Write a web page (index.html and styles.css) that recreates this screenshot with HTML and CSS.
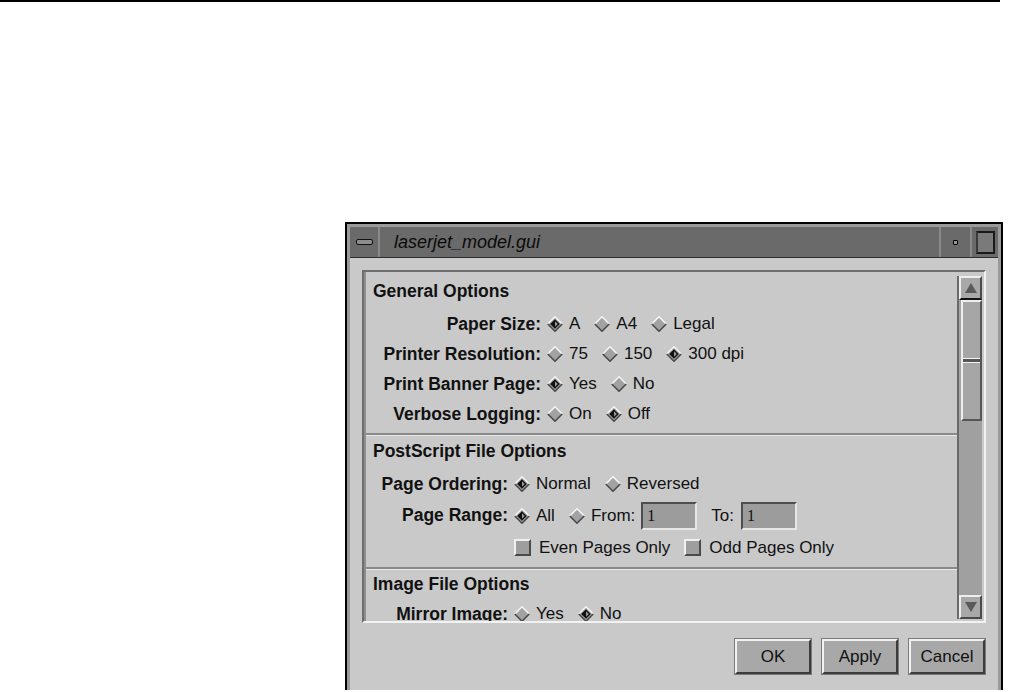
FILE: index.html
```html
<!DOCTYPE html>
<html lang="en">
<head>
    <meta charset="UTF-8">
    <title>laserjet_model.gui</title>
    <link rel="stylesheet" href="styles.css">
</head>
<body>
    <div class="rule"></div>

    <svg class="defs" width="0" height="0">
        <symbol id="radio-off" viewBox="0 0 16 16">
            <polygon points="8,0.5 15.5,8 8,15.5 0.5,8" fill="#a2a2a2"/>
            <polyline points="0.8,8 8,0.8 15.2,8" fill="none" stroke="#f4f4f4" stroke-width="1.6"/>
            <polyline points="0.8,8 8,15.2 15.2,8" fill="none" stroke="#4a4a4a" stroke-width="1.6"/>
        </symbol>
        <symbol id="radio-on" viewBox="0 0 16 16">
            <polygon points="8,0.5 15.5,8 8,15.5 0.5,8" fill="#a2a2a2"/>
            <polyline points="0.8,8 8,0.8 15.2,8" fill="none" stroke="#f4f4f4" stroke-width="1.6"/>
            <polyline points="0.8,8 8,15.2 15.2,8" fill="none" stroke="#4a4a4a" stroke-width="1.6"/>
            <polygon points="8,3.2 12.8,8 8,12.8 3.2,8" fill="#111"/>
            <polygon points="8,5.2 10.8,8 8,10.8" fill="#9a9a9a"/>
        </symbol>
    </svg>

    <div class="window">
        <div class="frame">
            <div class="titlebar">
                <div class="tb-menu"><span class="menu-bar"></span></div>
                <div class="tb-title">laserjet_model.gui</div>
                <div class="tb-min"><span class="dot"></span></div>
                <div class="tb-max"><span class="square"></span></div>
            </div>

            <div class="client">
                <div class="pane">
                    <div class="pane-content">

                        <div class="section general">
                            <div class="sec-title">General Options</div>
                            <div class="row">
                                <div class="label">Paper Size:</div>
                                <div class="opts">
                                    <span class="opt"><svg class="radio"><use href="#radio-on"/></svg>A</span>
                                    <span class="opt"><svg class="radio"><use href="#radio-off"/></svg>A4</span>
                                    <span class="opt"><svg class="radio"><use href="#radio-off"/></svg>Legal</span>
                                </div>
                            </div>
                            <div class="row">
                                <div class="label">Printer Resolution:</div>
                                <div class="opts">
                                    <span class="opt"><svg class="radio"><use href="#radio-off"/></svg>75</span>
                                    <span class="opt"><svg class="radio"><use href="#radio-off"/></svg>150</span>
                                    <span class="opt"><svg class="radio"><use href="#radio-on"/></svg>300 dpi</span>
                                </div>
                            </div>
                            <div class="row">
                                <div class="label">Print Banner Page:</div>
                                <div class="opts">
                                    <span class="opt"><svg class="radio"><use href="#radio-on"/></svg>Yes</span>
                                    <span class="opt"><svg class="radio"><use href="#radio-off"/></svg>No</span>
                                </div>
                            </div>
                            <div class="row">
                                <div class="label">Verbose Logging:</div>
                                <div class="opts">
                                    <span class="opt"><svg class="radio"><use href="#radio-off"/></svg>On</span>
                                    <span class="opt"><svg class="radio"><use href="#radio-on"/></svg>Off</span>
                                </div>
                            </div>
                        </div>

                        <div class="section postscript">
                            <div class="sec-title">PostScript File Options</div>
                            <div class="row">
                                <div class="label">Page Ordering:</div>
                                <div class="opts">
                                    <span class="opt"><svg class="radio"><use href="#radio-on"/></svg>Normal</span>
                                    <span class="opt"><svg class="radio"><use href="#radio-off"/></svg>Reversed</span>
                                </div>
                            </div>
                            <div class="row tall">
                                <div class="label">Page Range:</div>
                                <div class="opts">
                                    <span class="opt"><svg class="radio"><use href="#radio-on"/></svg>All</span>
                                    <span class="opt from"><svg class="radio"><use href="#radio-off"/></svg>From:</span>
                                    <span class="field">1</span>
                                    <span class="opt to">To:</span>
                                    <span class="field">1</span>
                                </div>
                            </div>
                            <div class="row checks">
                                <div class="label"></div>
                                <div class="opts">
                                    <span class="opt"><span class="check"></span>Even Pages Only</span>
                                    <span class="opt"><span class="check"></span>Odd Pages Only</span>
                                </div>
                            </div>
                        </div>

                        <div class="section image">
                            <div class="sec-title">Image File Options</div>
                            <div class="row">
                                <div class="label">Mirror Image:</div>
                                <div class="opts">
                                    <span class="opt"><svg class="radio"><use href="#radio-off"/></svg>Yes</span>
                                    <span class="opt"><svg class="radio"><use href="#radio-on"/></svg>No</span>
                                </div>
                            </div>
                        </div>

                    </div>

                    <div class="scrollbar">
                        <div class="arrow up"><span class="tri-up"></span></div>
                        <div class="thumb"><span class="grip"></span></div>
                        <div class="trough"></div>
                        <div class="arrow down"><span class="tri-down"></span></div>
                    </div>
                </div>

                <div class="buttons">
                    <button class="btn">OK</button>
                    <button class="btn">Apply</button>
                    <button class="btn">Cancel</button>
                </div>
            </div>
        </div>
    </div>
</body>
</html>
```

FILE: styles.css
```css
body {
    margin: 0;
    background: #fff;
    font-family: "Liberation Sans", Arial, sans-serif;
    color: #111;
}
.defs {
    position: absolute;
}
.rule {
    width: 1000px;
    height: 2px;
    background: #000;
}

/* window */
.window {
    margin: 220px 0 0 345px;
    width: 654px;
    height: 466px;
    border: 2px solid #000;
    border-bottom: 0;
}
.frame {
    height: 100%;
    border: 3px solid #9a9a9a;
    border-bottom: 0;
    box-sizing: border-box;
    display: flex;
    flex-direction: column;
    background: #c9c9c9;
}
.titlebar {
    height: 30px;
    display: flex;
    background: #6a6a6a;
    border-bottom: 1px solid #2e2e2e;
}
.tb-menu {
    width: 28px;
    display: flex;
    align-items: center;
    justify-content: center;
    border-right: 2px solid #8a8a8a;
}
.menu-bar {
    width: 15px;
    height: 4px;
    background: #8c8c8c;
    border: 1px solid #111;
    border-radius: 2px;
}
.tb-title {
    flex: 1;
    padding-left: 14px;
    font-style: italic;
    font-size: 18px;
    line-height: 30px;
    color: #0a0a0a;
}
.tb-min {
    width: 29px;
    display: flex;
    align-items: center;
    justify-content: center;
    border-left: 2px solid #8a8a8a;
    border-right: 2px solid #8a8a8a;
}
.dot {
    width: 3px;
    height: 3px;
    background: #999;
    border: 1px solid #000;
    border-radius: 1px;
}
.tb-max {
    width: 26px;
    display: flex;
    align-items: center;
    justify-content: center;
}
.square {
    width: 15px;
    height: 19px;
    border: 2px solid #1a1a1a;
    border-left-color: #3a3a3a;
    background: #7a7a7a;
}

/* client area */
.client {
    flex: 1;
    padding: 12px 12px 0 12px;
    display: flex;
    flex-direction: column;
}
.pane {
    height: 353px;
    display: flex;
    border: 2px solid;
    border-color: #6e6e6e #f2f2f2 #f2f2f2 #6e6e6e;
    box-sizing: border-box;
}
.pane-content {
    flex: 1;
    overflow: hidden;
    border-left: 2px solid #8e8e8e;
}
.section {
    padding: 0 0 4px 7px;
    border-bottom: 2px solid #8a8a8a;
    box-shadow: 0 1px 0 #e8e8e8;
}
.section.general {
    padding-top: 4px;
}
.section.postscript {
    padding-top: 1px;
}
.sec-title {
    height: 30px;
    line-height: 30px;
    margin-bottom: 3px;
    font-weight: bold;
    font-size: 17.5px;
}
.image .sec-title {
    margin-bottom: 0;
}
.row {
    display: flex;
    align-items: center;
    height: 30px;
}
.row.tall {
    height: 33px;
}
.row.checks {
    height: 31px;
}
.label {
    font-weight: bold;
    font-size: 17.5px;
    text-align: right;
    padding-right: 6px;
}
.general .label {
    width: 168px;
}
.postscript .label,
.image .label {
    width: 135px;
}
.opts {
    display: flex;
    align-items: center;
    font-size: 17px;
}
.opt {
    display: flex;
    align-items: center;
    margin-right: 14px;
}
.opt.from {
    margin-right: 6px;
}
.opt.to {
    margin-left: 14px;
    margin-right: 7px;
}
.radio {
    width: 16px;
    height: 16px;
    margin-right: 6px;
}
.check {
    width: 13px;
    height: 13px;
    margin-right: 8px;
    background: #9e9e9e;
    border: 2px solid;
    border-color: #f0f0f0 #4a4a4a #4a4a4a #f0f0f0;
}
.field {
    width: 48px;
    height: 24px;
    padding-left: 4px;
    background: #9c9c9c;
    border: 2px solid;
    border-color: #4e4e4e #e6e6e6 #e6e6e6 #4e4e4e;
    font-family: "Liberation Serif", "Times New Roman", serif;
    font-size: 16px;
    line-height: 24px;
}

/* scrollbar */
.scrollbar {
    width: 23px;
    margin: 4px 2px 2px 0;
    display: flex;
    flex-direction: column;
    background: #a4a4a4;
    border-left: 2px solid #6a6a6a;
}
.arrow {
    height: 20px;
    display: flex;
    align-items: center;
    justify-content: center;
    background: #a8a8a8;
    border: 2px solid;
    border-color: #eeeeee #4a4a4a #4a4a4a #eeeeee;
}
.arrow.up {
    border-bottom: 2px solid #111;
}
.tri-up {
    border-left: 6px solid transparent;
    border-right: 6px solid transparent;
    border-bottom: 10px solid #5a5a5a;
}
.tri-down {
    border-left: 6px solid transparent;
    border-right: 6px solid transparent;
    border-top: 10px solid #5a5a5a;
}
.thumb {
    height: 117px;
    margin-left: 2px;
    display: flex;
    align-items: center;
    background: #a6a6a6;
    border: 2px solid;
    border-color: #eeeeee #555 #555 #eeeeee;
}
.grip {
    width: 100%;
    height: 3px;
    border-top: 1px solid #f4f4f4;
    border-bottom: 1px solid #f4f4f4;
    background: #555;
}
.trough {
    flex: 1;
    background: #a0a0a0;
}

/* buttons */
.buttons {
    display: flex;
    justify-content: flex-end;
    gap: 11px;
    padding: 16px 1px 0 0;
}
.btn {
    width: 76px;
    height: 35px;
    font-family: "Liberation Sans", Arial, sans-serif;
    font-size: 17px;
    color: #111;
    background: #a8a8a8;
    border: 2px solid;
    border-color: #f2f2f2 #3c3c3c #3c3c3c #f2f2f2;
    box-shadow: 0 0 0 1px #7a7a7a;
}
```
